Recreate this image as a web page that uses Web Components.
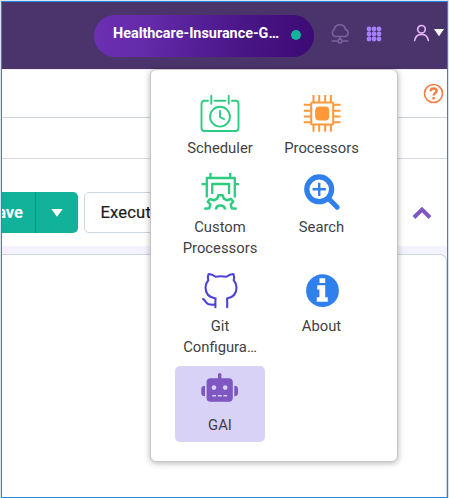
<!DOCTYPE html>
<html lang="en">
<head>
<meta charset="utf-8">
<title>Application menu</title>
<style>
html,body{margin:0;height:100%;overflow:hidden;font-family:Roboto,"Liberation Sans",sans-serif;background:#fff}
</style>
</head>
<body>
<app-shell></app-shell>
<script>
const define = (name, html) => customElements.define(name, class extends HTMLElement {
  connectedCallback() {
    if (this.shadowRoot) return;
    const t = document.createElement('template');
    t.innerHTML = html;
    this.attachShadow({mode: 'open'}).appendChild(t.content.cloneNode(true));
  }
});

define('project-pill', `
<style>
:host{box-sizing:border-box;display:flex;align-items:center;width:220px;height:42px;padding:0 13px 4px 19px;border-radius:21px;background:linear-gradient(100deg,#6c30b3 0%,#632aa9 25%,#4a1788 65%,#3c0a74 100%);color:#fff;font-size:14.4px;font-weight:700}
span{width:178px;white-space:nowrap;line-height:20px}
i{width:10px;height:10px;border-radius:50%;background:#14b39b;margin-top:2px}
</style><span><slot></slot></span><i></i>`);

define('top-bar', `
<style>
:host{box-sizing:border-box;display:flex;align-items:flex-start;height:67px;padding:13px 0 0 92px;background:#4b346b}
svg{display:block;flex:none}
.cloud{margin:9px 0 0 16px}.grid{margin:11px 0 0 16px}.user{margin:9px 0 0 31px}.caret{margin:14px 0 0 4px}
</style>
<project-pill>Healthcare-Insurance-G…</project-pill>
<svg class="cloud" width="20" height="21" viewBox="0 0 20 21" fill="none" stroke="#79639c" stroke-width="1.6" stroke-linecap="round"><path d="M5 12.500A4.100 4.100 0 0 1 4.300 5.200 5.700 5.700 0 0 1 15.400 5.200 3.800 3.800 0 0 1 15.200 12.500ZM10 12.500v2.500M2.300 17h5M12.700 17h5"/><circle cx="10" cy="17" r="1.9"/></svg>
<svg class="grid" width="16" height="16" viewBox="0 0 16 16" fill="#a57fff"><g id="r"><circle cx="3" cy="3" r="2.4"/><circle cx="8" cy="3" r="2.4"/><circle cx="13" cy="3" r="2.4"/></g><use href="#r" y="5"/><use href="#r" y="10"/></svg>
<svg class="user" width="17" height="19" viewBox="0 0 17 19" fill="none" stroke="#e6b3f5" stroke-width="1.7" stroke-linecap="round"><circle cx="8.5" cy="5.3" r="3.8"/><path d="M1.700 16.300c.6-3.600 3-6 6.800-6s6.200 2.400 6.800 6"/></svg>
<svg class="caret" width="10" height="8" viewBox="0 0 10 8" fill="#fff"><path d="M0 0h10L5 7.200z"/></svg>`);

define('split-button', `
<style>
:host{box-sizing:border-box;display:flex;width:76px;height:41px;border-radius:0 5px 5px 0;background:#12b199;color:#fff;overflow:hidden;font-size:16.5px;font-weight:700}
.t{box-sizing:border-box;width:34px;display:flex;justify-content:flex-end;align-items:center;padding-right:12px;border-right:1px solid #118c7e;white-space:nowrap}
.c{flex:1;display:flex;align-items:center;justify-content:center}
</style><div class="t"><slot></slot></div><div class="c"><svg width="12" height="8"><path d="M.3 0h11.400L6 7.800z" fill="#fff"/></svg></div>`);

define('plain-button', `
<style>
:host{box-sizing:border-box;display:flex;align-items:center;width:100px;height:41px;border:1px solid #cfd5df;border-radius:5px;padding:0 0 1px 15.5px;color:#1b1b1f;font-size:16.6px;letter-spacing:.15px;-webkit-text-stroke:.2px #1b1b1f}
</style><slot></slot>`);

define('work-area', `
<style>
:host{display:flex;flex-direction:column;flex:1;background:#fff}
.help,.row,.bar,.band{box-sizing:border-box;flex:none}
.help{height:49px;border-top:1px solid #f1f0f8;border-bottom:1px solid #cdd6e0;display:flex;justify-content:flex-end;padding:13px 3px 0 0}
.row{height:41px;border-bottom:1px solid #d6d8e3}
.bar{height:87px;display:flex;align-items:flex-start;gap:6px;padding:33px 15px 0 0}
.up{margin:14px 0 0 auto}
.band{height:8px;background:#f4f2fc}
.panel{flex:1;background:#f4f2fc;display:flex}
.panel div{flex:1;border:solid #cdd6e0;border-width:1px 1px 0 0;border-radius:0 7px 0 0;background:#fff}
</style>
<div class="help"><svg width="21" height="21" viewBox="0 0 21 21" fill="none" stroke="#f57c42"><circle cx="10.5" cy="10.5" r="9" stroke-width="1.6"/><path d="M7.500 8.300c.1-1.900 1.300-2.800 3.100-2.800 1.900 0 3 1 3 2.500 0 2.100-2.900 2.200-2.900 4.400" stroke-width="2.4"/><path d="M10.600 14.100v2.300" stroke-width="2.5"/></svg></div>
<div class="row"></div>
<div class="bar"><split-button>Save</split-button><plain-button>Execute</plain-button><svg class="up" width="20" height="14" viewBox="0 0 20 14"><path d="M2 11.500 10 3.600l8 7.900" fill="none" stroke="#7e57c2" stroke-width="4"/></svg></div>
<div class="band"></div>
<div class="panel"><div></div></div>`);

define('menu-item', `
<style>
:host{box-sizing:border-box;display:flex;flex-direction:column;align-items:center;align-self:start;width:90px;padding:4px 0 5.7px;border-radius:5px;color:#3f3f44;font-size:14.8px;line-height:21.5px;text-align:center}
:host([active]){background:#d7d2f6}
::slotted(svg){display:block;width:40px;height:40px;margin-bottom:4.8px}
</style><slot name="icon"></slot><div><slot></slot></div>`);

define('app-menu', `
<style>
:host{box-sizing:border-box;width:248px;height:393px;border:1px solid #c6c6c8;border-radius:6px;background:#fff;box-shadow:0 1px 6px rgba(0,0,0,.3);display:grid;grid-template-columns:90px 90px;column-gap:11.5px;grid-template-rows:79px 99px 99px 76px;padding:19px 0 0 24px}
</style>
<menu-item><svg slot="icon" viewBox="0 0 40 40" fill="none" stroke="#2ecc80" stroke-width="1.9" stroke-linecap="round" stroke-linejoin="round"><path d="M8 7.800H4.500q-3 0-3 3V35q0 3 3 3h31q3 0 3-3V10.800q0-3-3-3H32M14.500 7.800h11M11.300 2.700v8M28.700 2.700v8"/><circle cx="20" cy="23.700" r="9.900"/><path d="M20 18v6l4 2.200"/></svg>Scheduler</menu-item>
<menu-item><svg slot="icon" viewBox="0 0 40 40" fill="none" stroke="#ff9838" stroke-width="2"><rect x="9.200" y="9.600" width="22" height="22" rx="1"/><path d="M11.500 2v7M17.200 2v7M23.200 2v7M28.900 2v7M11.500 32v6.700M17.200 32v6.700M23.200 32v6.700M28.900 32v6.700M1.800 11.700h7M1.800 17.700h7M1.800 23.400h7M1.800 29.300h7M31.500 11.700h7M31.500 17.700h7M31.500 23.400h7M31.500 29.300h7"/><rect x="13.200" y="13.600" width="14" height="14" rx="4" fill="#ff9838" stroke="none"/></svg>Processors</menu-item>
<menu-item><svg slot="icon" viewBox="0 0 40 40" fill="none" stroke="#2ecc80" stroke-width="2.300" stroke-linejoin="round"><path d="M6.800 25.500V6h28v19.500M10.500 1v5M30.200 1v5M1.500 12.200h5M35 12.200h4M12.200 22V12h16.900v10"/><path d="M4.300 36.700 9.300 36.300 10.300 32.300 7.700 29.700 10 27 13.800 28.300 17.200 26.600 18.300 23.300H22.700L23.800 26.600 27.200 28.300 31 27 33.300 29.700 30.700 32.300 31.700 36.300 36.700 36.700M15.800 37.500a4.700 4.700 0 0 1 9.300 0" stroke-width="2.500"/></svg>Custom<br>Processors</menu-item>
<menu-item><svg slot="icon" viewBox="0 0 40 40" fill="none" stroke="#2f80ed"><circle cx="17.200" cy="17.300" r="12.400" stroke-width="5.300"/><path d="M17.200 10.700v13.200M10.600 17.300h13.200" stroke-width="2.400"/><path d="M26.500 26.500l8.700 8.700" stroke-width="5" stroke-linecap="round"/></svg>Search</menu-item>
<menu-item><svg slot="icon" viewBox="0 0 40 40" fill="none" stroke="#4d43d8" stroke-width="2.100" stroke-linejoin="round" stroke-linecap="round"><path d="M15.400 36.300V30q0-2 .3-2.500C8.800 26.500 5.500 22.500 5.500 16.500q0-4 2.800-7.200Q7.200 6 8.600 3q3.500 0 7 2.800 5.400-1 10.800 0 3.500-2.800 7-2.800 1.400 3 .3 6.300Q36.500 12.500 36.500 16.500c0 6-3.300 10-9.600 11q.3.500.3 2.500v6.300M3 28c1.200.5 1.700 1.300 2.600 2.700 2 3 5.500 3.500 9.800 2.700"/></svg>Git<br>Configura…</menu-item>
<menu-item><svg slot="icon" viewBox="0 0 40 40"><circle cx="20.500" cy="19.700" r="16.400" fill="#2f80ed"/><path d="M17.500 7.200h5.700v4.700h-5.700zM15.200 14.300h8v12h2.600v4.400h-11v-4.400h2.600v-7.700h-2.200z" fill="#fff"/></svg>About</menu-item>
<menu-item active><svg slot="icon" viewBox="0 0 40 40" fill="#7e57c2"><path d="M18 10V4.600a1.700 1.700 0 0 1 3.400 0V10zM5 15.700v10.600q-3.700 0-3.700-3v-4.600q0-3 3.700-3zM34.300 15.700v10.600q3.700 0 3.700-3v-4.600q0-3-3.700-3z"/><rect x="6.600" y="8.200" width="26.200" height="23.500" rx="4"/><g fill="#d7d2f6"><circle cx="14" cy="17.600" r="2.300"/><circle cx="25.200" cy="17.600" r="2.300"/><path d="M12.300 25h3.700v1.500h-3.700zM17.800 25h3.900v1.500h-3.900zM23.400 25h3.700v1.500h-3.700z"/></g></svg>GAI</menu-item>`);

define('app-shell', `
<style>
:host{box-sizing:border-box;position:relative;display:flex;flex-direction:column;width:449px;height:498px;padding:1px 1px 0 1px;background:#d4e6f5}
.frame{box-sizing:border-box;flex:1;display:flex;flex-direction:column;border:1px solid #2b86d9;overflow:hidden}
app-menu{position:absolute;left:150px;top:69px}
</style>
<div class="frame"><top-bar></top-bar><work-area></work-area></div><app-menu></app-menu>`);
</script>
</body>
</html>
